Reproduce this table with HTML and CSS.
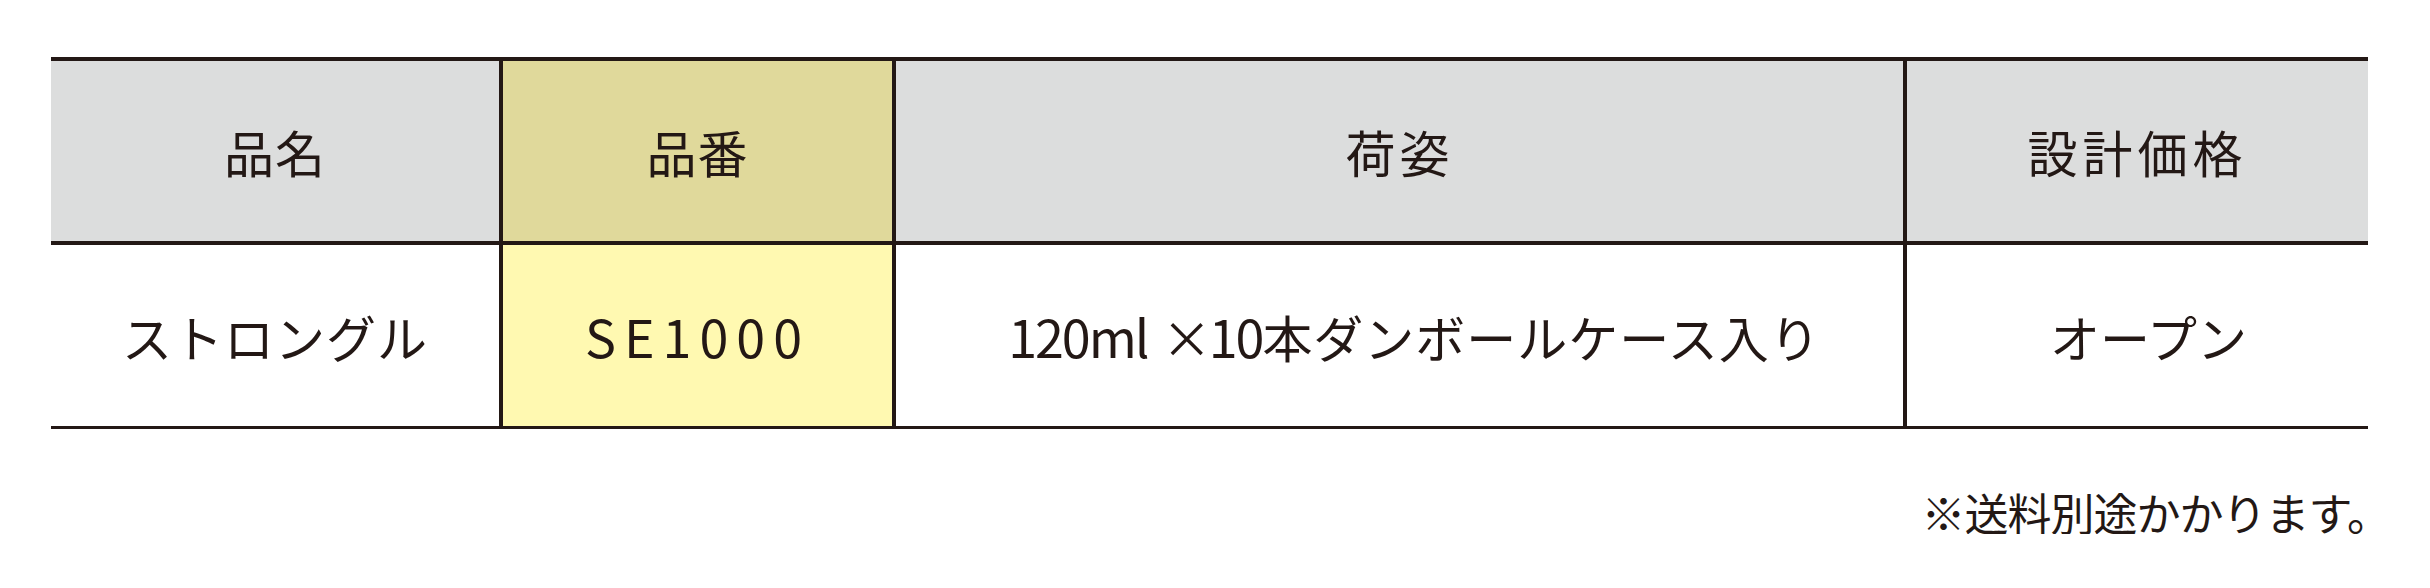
FILE: index.html
```html
<!DOCTYPE html>
<html lang="ja">
<head>
<meta charset="utf-8">
<title>ストロングル</title>
<link rel="stylesheet" href="styles.css">
</head>
<body>
<div class="page">
  <div class="spec">
    <div class="cell head c1"><span class="t-hinmei">品名</span></div>
    <div class="cell head c2 head-code"><span class="t-hinban">品番</span></div>
    <div class="cell head c3"><span class="t-nisugata">荷姿</span></div>
    <div class="cell head c4"><span class="t-price">設計価格</span></div>
    <div class="cell body c1"><span class="t-name">ストロングル</span></div>
    <div class="cell body c2 body-code"><span class="t-code">SE1000</span></div>
    <div class="cell body c3 pack"><span class="t-pack"><span class="num">120ml</span><span class="times">×</span><span class="num">10</span>本ダンボールケース入り</span></div>
    <div class="cell body c4 open"><span class="t-open">オープン</span></div>
  </div>
  <p class="note">※送料別途かかります。</p>
</div>
</body>
</html>
```

FILE: styles.css
```css
html, body {
  margin: 0;
  padding: 0;
  background: #ffffff;
}

body {
  font-family: "Noto Sans CJK JP", "Noto Sans", sans-serif;
  color: #231815;
}

.page {
  width: 2317px;
  padding: 57px 0 0 51px;
}

.spec {
  display: grid;
  grid-template-columns: 452px 393px 1011px 461px;
  grid-template-rows: 184px 184px;
  border-top: 4px solid #231815;
}

.cell {
  box-sizing: border-box;
  display: flex;
  align-items: center;
  justify-content: center;
  font-size: 50px;
  line-height: 1;
}

.cell.c1, .cell.c2, .cell.c3 {
  border-right: 4px solid #231815;
}

.cell.head {
  background: #dcdddd;
  border-bottom: 4px solid #231815;
}

.cell.head.head-code {
  background: #e0d99b;
}

.cell.body {
  background: #ffffff;
  border-bottom: 3px solid #231815;
}

.cell.body.body-code {
  background: #fff9b1;
}

.cell.body.pack {
  padding-left: 30px;
}

.cell.body.open {
  padding-left: 22px;
}

.t-hinmei, .t-hinban { letter-spacing: 1px; }
.t-nisugata { letter-spacing: 4px; }
.t-price { letter-spacing: 5px; }
.t-name { letter-spacing: 1px; }
.t-code { letter-spacing: 8px; font-size: 52px; }
.t-pack { letter-spacing: 1px; }
.t-pack .num { font-size: 52px; letter-spacing: -2px; }
.t-pack .times { padding: 0 0 0 14px; margin-right: -4px; }

.note {
  margin: 61px 0 0 0;
  text-align: right;
  font-size: 44px;
  line-height: 1;
  letter-spacing: -1px;
  font-feature-settings: "halt";
}
```
